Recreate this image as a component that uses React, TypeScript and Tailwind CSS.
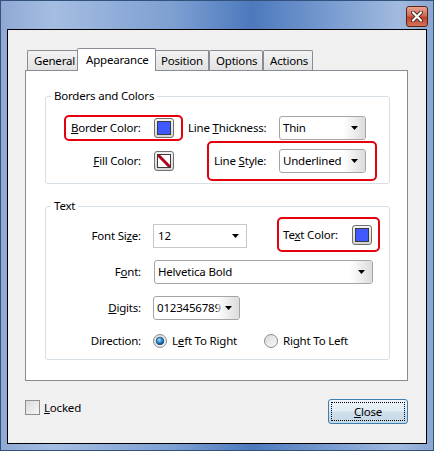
import React from "react";

// ─── Small pieces ─────────────────────────────────────────────────────────────
function Arrow() {
  return (
    <svg width="7" height="4" viewBox="0 0 7 4" aria-hidden="true">
      <path d="M0 0h7L3.5 4z" fill="#000" />
    </svg>
  );
}

function Combo({ value, w, flat = false }: { value: string; w: string; flat?: boolean }) {
  if (flat) {
    return (
      <div className={`${w} flex h-[24px] items-center border border-[#c4c8cc] bg-white`}>
        <span className="flex-1 pl-[4px] leading-[16px]">{value}</span>
        <span className="mr-[6px] flex w-[10px] justify-center">
          <Arrow />
        </span>
      </div>
    );
  }
  return (
    <div
      className={`${w} relative flex h-[24px] items-center overflow-hidden rounded-[3px] border border-[#a5a5a5] bg-white`}
    >
      <span className="flex-1 overflow-hidden whitespace-nowrap pl-[3px] leading-[16px]">{value}</span>
      <span className="absolute inset-y-0 right-0 flex w-[22px] items-center justify-center bg-[linear-gradient(90deg,rgba(255,255,255,0.5),#dcdcdc)]">
        <Arrow />
      </span>
    </div>
  );
}

function Swatch({ fill = false }: { fill?: boolean }) {
  return (
    <div className="flex h-[20px] w-[20px] items-center justify-center rounded-[3px] border border-[#707070] bg-[linear-gradient(#f3f3f3,#d6d6d6)]">
      {fill ? (
        <div className="h-[14px] w-[14px] overflow-hidden border border-[#3c3c3c] bg-white">
          <svg width="12" height="12" viewBox="0 0 12 12" aria-hidden="true">
            <path d="M0 0L12 12" stroke="#b3001b" strokeWidth="3" />
          </svg>
        </div>
      ) : (
        <div className="h-[14px] w-[14px] border border-[#3c3c3c] bg-[#4058ff]" />
      )}
    </div>
  );
}

function Radio({ on = false }: { on?: boolean }) {
  return (
    <svg width="14" height="14" viewBox="0 0 14 14" aria-hidden="true">
      <defs>
        <linearGradient id={on ? "rbgOn" : "rbgOff"} x1="0" y1="0" x2="1" y2="1">
          <stop offset="0" stopColor="#d8d8d8" />
          <stop offset="1" stopColor="#fbfbfb" />
        </linearGradient>
        <radialGradient id="rdot" cx="0.4" cy="0.35" r="0.7">
          <stop offset="0" stopColor="#a6e0fb" />
          <stop offset="0.5" stopColor="#2b8ccf" />
          <stop offset="1" stopColor="#0b3f72" />
        </radialGradient>
      </defs>
      <circle cx="7" cy="7" r="6.5" fill={`url(#${on ? "rbgOn" : "rbgOff"})`} stroke="#8a8a8a" />
      {on && <circle cx="7" cy="7" r="3.8" fill="url(#rdot)" stroke="#1c4a74" strokeWidth="0.8" />}
    </svg>
  );
}

function Red({ className, children }: { className: string; children: React.ReactNode }) {
  return (
    <div className={`flex items-center rounded-[5px] border-2 border-[#e4000f] ${className}`}>{children}</div>
  );
}

// ─── App ──────────────────────────────────────────────────────────────────────
export default function App() {
  return (
    <div className="flex h-[451px] w-[434px] flex-col border border-[#31527c] bg-[linear-gradient(90deg,#8fa9d4_0%,#a5bde2_12%,#7d9fd2_40%,#4c79bd_58%,#7d9fd2_78%,#a2badf_92%,#8aa6d2_100%)] font-['Segoe_UI','Noto_Sans',sans-serif] text-[11.5px] tracking-[-0.2px] text-black">
      {/* Title bar */}
      <div className="flex h-[28px] items-start justify-end">
        <button className="mr-[5px] mt-[5px] flex h-[21px] w-[22px] items-center justify-center rounded-[3px] border border-[#5a2418] bg-[linear-gradient(#eaa594,#d26a52_45%,#c0412a_55%,#d5735a)]">
          <svg width="12" height="11" viewBox="0 0 12 11" aria-hidden="true">
            <path d="M2 1.5L10 9.5M10 1.5L2 9.5" stroke="#4a2a24" strokeWidth="4" strokeLinecap="round" />
            <path d="M2 1.5L10 9.5M10 1.5L2 9.5" stroke="#fff" strokeWidth="2.2" strokeLinecap="round" />
          </svg>
        </button>
      </div>

      {/* Client area */}
      <div className="mx-[6px] flex h-[415px] flex-col border border-black bg-[#f0f0f0]">
        <div className="ml-[17px] mt-[18px] w-[383px]">
          {/* Tab headers */}
          <div className="flex h-[22px] items-end pl-[2px]">
            <div className="flex h-[20px] w-[50px] items-center rounded-tl-[2px] border-l border-t border-[#898c95] bg-[linear-gradient(#f3f3f3,#e2e2e2)] pl-[6px]">
              General
            </div>
            <div className="relative z-10 -mb-px flex h-[23px] w-[79px] items-start rounded-t-[2px] border-x border-t border-[#898c95] bg-white pl-[8px] pt-[2px]">
              Appearance
            </div>
            <div className="flex h-[20px] w-[53px] items-center border-r border-t border-[#898c95] bg-[linear-gradient(#f3f3f3,#e2e2e2)] pl-[5px]">
              Position
            </div>
            <div className="flex h-[20px] w-[54px] items-center rounded-t-[2px] border-x border-t border-[#898c95] bg-[linear-gradient(#f3f3f3,#e2e2e2)] pl-[6px]">
              Options
            </div>
            <div className="flex h-[20px] w-[50px] items-center rounded-t-[2px] border-x border-t border-[#898c95] bg-[linear-gradient(#f3f3f3,#e2e2e2)] pl-[6px]">
              Actions
            </div>
          </div>

          {/* Tab panel */}
          <div className="h-[311px] border border-[#898c95] bg-white">
            {/* Borders and Colors */}
            <div className="relative ml-[19px] mt-[25px] h-[88px] w-[345px] rounded-[3px] border border-[#d5dfe5]">
              <span className="absolute left-[5px] top-[-9px] bg-white px-[3px] leading-[16px]">Borders and Colors</span>
              <div className="mt-[18px] flex h-[26px] items-center">
                <Red className="ml-[18px] h-[26px] w-[119px] pl-[5px] pr-[7px]">
                  <span>
                    <u>B</u>order Color:
                  </span>
                  <span className="ml-auto">
                    <Swatch />
                  </span>
                </Red>
                <span className="ml-[5px] w-[91px]">
                  Line <u>T</u>hickness:
                </span>
                <Combo value="Thin" w="w-[87px]" />
              </div>
              <div className="flex h-[40px] items-center">
                <div className="flex w-[161px] items-center">
                  <span className="w-[95px] text-right">
                    <u>F</u>ill Color:
                  </span>
                  <span className="ml-[13px]">
                    <Swatch fill />
                  </span>
                </div>
                <Red className="h-[40px] w-[170px] pl-[5px] pr-[9px]">
                  <span>
                    Line <u>S</u>tyle:
                  </span>
                  <span className="ml-auto">
                    <Combo value="Underlined" w="w-[87px]" />
                  </span>
                </Red>
              </div>
            </div>

            {/* Text */}
            <div className="relative ml-[19px] mt-[22px] h-[154px] w-[345px] rounded-[3px] border border-[#d5dfe5]">
              <span className="absolute left-[5px] top-[-9px] bg-white px-[3px] leading-[16px]">Text</span>
              <div className="mt-[10px] flex h-[35px] items-center">
                <span className="mt-[3px] w-[95px] text-right">
                  Font Si<u>z</u>e:
                </span>
                <span className="ml-[12px] mt-[3px]">
                  <Combo value="12" w="w-[94px]" flat />
                </span>
                <Red className="ml-[30px] h-[35px] w-[103px] pl-[4px] pr-[6px]">
                  <span>
                    Te<u>x</u>t Color:
                  </span>
                  <span className="ml-auto">
                    <Swatch />
                  </span>
                </Red>
              </div>
              <div className="mt-[8px] flex h-[24px] items-center">
                <span className="w-[95px] text-right">
                  F<u>o</u>nt:
                </span>
                <span className="ml-[13px]">
                  <Combo value="Helvetica Bold" w="w-[219px]" />
                </span>
              </div>
              <div className="mt-[12px] flex h-[24px] items-center">
                <span className="w-[95px] text-right">
                  <u>D</u>igits:
                </span>
                <span className="ml-[12px]">
                  <Combo value="0123456789" w="w-[87px]" />
                </span>
              </div>
              <div className="mt-[13px] flex h-[16px] items-center">
                <span className="w-[95px] text-right">Direction:</span>
                <div className="ml-[12px] flex w-[111px] items-center">
                  <Radio on />
                  <span className="ml-[5px]">
                    L<u>e</u>ft To Right
                  </span>
                </div>
                <div className="flex items-center">
                  <Radio />
                  <span className="ml-[5px]">
                    Ri<u>g</u>ht To Left
                  </span>
                </div>
              </div>
            </div>
          </div>
        </div>

        {/* Bottom row */}
        <div className="mt-[18px] flex items-start">
          <div className="ml-[17px] mt-[1px] flex items-center">
            <div className="h-[15px] w-[15px] border border-[#8f8f8f] bg-[linear-gradient(135deg,#d9d9d9,#f7f7f7)]" />
            <span className="ml-[4px] leading-[15px]">
              <u>L</u>ocked
            </span>
          </div>
          <button className="ml-auto mr-[18px] h-[25px] w-[80px] rounded-[3px] border border-[#3c7fb1] bg-[linear-gradient(#eef5fa,#e1ecf4_48%,#cfdfeb_52%,#c5d8e7)] p-[2px]">
            <div className="flex h-full w-full items-center justify-center border border-dotted border-black">
              <span>
                <u>C</u>lose
              </span>
            </div>
          </button>
        </div>
      </div>
    </div>
  );
}
